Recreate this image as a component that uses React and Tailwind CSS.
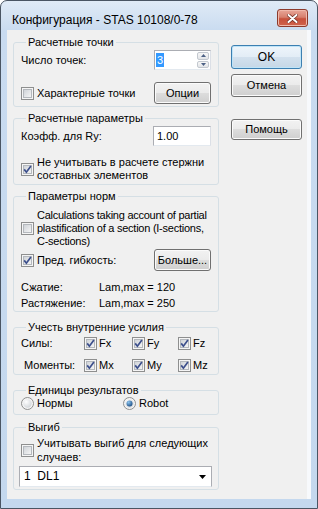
import React from 'react';

const GB = 'border border-[#d5dfe5] rounded-[3px] px-[7px] min-w-0';
const LG = 'ml-[5px] px-[2px] leading-[13px]';

function Check({ checked }) {
  return (
    <svg width="13" height="13" viewBox="0 0 13 13" className="shrink-0">
      <defs>
        <linearGradient id="cbin" x1="0" y1="0" x2="1" y2="1">
          <stop offset="0" stopColor="#cdd1d6" />
          <stop offset="1" stopColor="#f7f7f7" />
        </linearGradient>
      </defs>
      <rect x="0.5" y="0.5" width="12" height="12" fill="#f5f5f5" stroke="#8e8f8f" />
      <rect x="2.5" y="2.5" width="8" height="8" fill="url(#cbin)" stroke="#b4b8bd" />
      {checked && (
        <path d="M3.2 6.4 L5.4 9.2 L9.9 2.9" fill="none" stroke="#3c4f8c" strokeWidth="1.7" />
      )}
    </svg>
  );
}

function Radio({ checked }) {
  return (
    <svg width="13" height="13" viewBox="0 0 13 13" className="shrink-0">
      <defs>
        <radialGradient id="rdin" cx="0.35" cy="0.3" r="0.8">
          <stop offset="0" stopColor="#ffffff" />
          <stop offset="1" stopColor="#cfd3d8" />
        </radialGradient>
        <radialGradient id="rdon" cx="0.35" cy="0.3" r="0.8">
          <stop offset="0" stopColor="#8fc6f0" />
          <stop offset="1" stopColor="#15467d" />
        </radialGradient>
      </defs>
      <circle cx="6.5" cy="6.5" r="6" fill="#f4f4f4" stroke="#8e8f8f" />
      <circle cx="6.5" cy="6.5" r="4.2" fill="url(#rdin)" />
      {checked && <circle cx="6.5" cy="6.5" r="3" fill="url(#rdon)" />}
    </svg>
  );
}

function Btn({ children, def, className }) {
  return (
    <div
      className={
        'flex items-center justify-center rounded-[3px] border ' +
        (def
          ? 'border-[#3c7fb1] bg-[linear-gradient(#eef5fb_0%,#e3edf6_49%,#d3e1ee_50%,#c6d7e6_100%)] shadow-[inset_0_0_0_1px_#bfe4f8] '
          : 'border-[#707070] bg-[linear-gradient(#f2f2f2_0%,#ebebeb_49%,#dddddd_50%,#cfcfcf_100%)] shadow-[inset_0_0_0_1px_#fbfbfb] ') +
        className
      }
    >
      {children}
    </div>
  );
}

function Spin() {
  return (
    <div className="flex h-[20px] w-[57px] border border-[#abadb3] border-b-[#e3e9ef] border-r-[#dbdfe6] bg-white">
      <div className="flex-1 flex items-center pl-[1px]">
        <span className="bg-[#3399ff] text-white leading-[14px] px-[1px]">3</span>
      </div>
      <div className="w-[14px] flex flex-col gap-[1px] p-[1px]">
        <div className="flex-1 flex items-center justify-center rounded-[2px] border border-[#c3c8cf] bg-[linear-gradient(#f7f7f7,#e3e5e8)]">
          <svg width="5" height="3" viewBox="0 0 5 3"><path d="M0 3 L2.5 0 L5 3 Z" fill="#4d6185" /></svg>
        </div>
        <div className="flex-1 flex items-center justify-center rounded-[2px] border border-[#c3c8cf] bg-[linear-gradient(#f7f7f7,#e3e5e8)]">
          <svg width="5" height="3" viewBox="0 0 5 3"><path d="M0 0 L5 0 L2.5 3 Z" fill="#4d6185" /></svg>
        </div>
      </div>
    </div>
  );
}

function Field({ value, className }) {
  return (
    <div className={'flex items-center pl-[3px] bg-white border border-[#abadb3] border-b-[#e3e9ef] border-r-[#dbdfe6] ' + className}>
      {value}
    </div>
  );
}

export default function App() {
  return (
    <div className="w-[318px] h-[509px] flex flex-col rounded-t-[7px] border border-[#4a5563] bg-[linear-gradient(#e0eaf6,#c9dbf0_30px,#c4d8ee)] font-['Liberation_Sans',Arial,sans-serif] text-[11px] text-black leading-[13px]">
      {/* title bar */}
      <div className="h-[29px] flex items-start justify-between shrink-0">
        <div className="pl-[11px] pt-[12px] text-[12px] leading-[14px]">Конфигурация - STAS 10108/0-78</div>
        <div className="mt-[8px] mr-[9px] w-[31px] h-[18px] rounded-[3px] border border-[#8c3a2c] bg-[linear-gradient(#e8a698_0%,#d7806e_45%,#c7503b_55%,#d0634c_100%)] shadow-[inset_0_0_0_1px_#f0b9ab] flex items-center justify-center">
          <svg width="11" height="9" viewBox="0 0 11 9">
            <path d="M1.5 1 L9.5 8 M9.5 1 L1.5 8" stroke="#6d2a20" strokeWidth="3.4" strokeLinecap="round" />
            <path d="M1.5 1 L9.5 8 M9.5 1 L1.5 8" stroke="#ffffff" strokeWidth="2" strokeLinecap="round" />
          </svg>
        </div>
      </div>

      {/* client area */}
      <div className="mx-[6px] mb-[9px] flex-1 bg-[#f0f0f0] flex pl-[6px] pt-[6px] border-r-[4px] border-r-[#f7f9fc]">
        <div className="w-[206px] flex flex-col">
          <fieldset className={GB + ' h-[71px]'}>
            <legend className={LG}>Расчетные точки</legend>
            <div className="flex items-center justify-between h-[20px] mt-[1px]">
              <span>Число точек:</span>
              <Spin />
            </div>
            <div className="flex items-center justify-between h-[22px] mt-[12px]">
              <div className="flex items-center gap-[3px]"><Check />Характерные точки</div>
              <Btn className="w-[57px] h-[22px]">Опции</Btn>
            </div>
          </fieldset>

          <fieldset className={GB + ' h-[73px] mt-[5px]'}>
            <legend className={LG}>Расчетные параметры</legend>
            <div className="flex items-center justify-between h-[20px] mt-[1px]">
              <span>Коэфф. для Ry:</span>
              <Field value="1.00" className="w-[58px] h-[20px]" />
            </div>
            <div className="flex items-center gap-[3px] mt-[10px] whitespace-nowrap">
              <Check checked />
              <div>Не учитывать в расчете стержни<br />составных элементов</div>
            </div>
          </fieldset>

          <fieldset className={GB + ' h-[122px] mt-[5px]'}>
            <legend className={LG}>Параметры норм</legend>
            <div className="flex items-center gap-[3px] mt-[6px] whitespace-nowrap tracking-[-0.25px]">
              <Check />
              <div>Calculations taking account of partial<br />plastification of a section (I-sections,<br />C-sections)</div>
            </div>
            <div className="flex items-center justify-between h-[22px] mt-[1px]">
              <div className="flex items-center gap-[3px]"><Check checked />Пред. гибкость:</div>
              <Btn className="w-[57px] h-[22px]">Больше...</Btn>
            </div>
            <div className="flex mt-[10px]">
              <span className="w-[78px]">Сжатие:</span>
              <span>Lam,max = 120</span>
            </div>
            <div className="flex mt-[3px]">
              <span className="w-[78px]">Растяжение:</span>
              <span>Lam,max = 250</span>
            </div>
          </fieldset>

          <fieldset className={GB + ' h-[54px] mt-[9px]'}>
            <legend className={LG}>Учесть внутренние усилия</legend>
            <div className="flex items-center h-[14px] mt-[2px]">
              <span className="w-[63px]">Силы:</span>
              <div className="w-[48px] flex items-center gap-[2px]"><Check checked />Fx</div>
              <div className="w-[46px] flex items-center gap-[2px]"><Check checked />Fy</div>
              <div className="flex items-center gap-[2px]"><Check checked />Fz</div>
            </div>
            <div className="flex items-center h-[14px] mt-[8px]">
              <span className="w-[63px] pl-[3px]">Моменты:</span>
              <div className="w-[48px] flex items-center gap-[2px]"><Check checked />Mx</div>
              <div className="w-[46px] flex items-center gap-[2px]"><Check checked />My</div>
              <div className="flex items-center gap-[2px]"><Check checked />Mz</div>
            </div>
          </fieldset>

          <fieldset className={GB + ' h-[31px] mt-[9px]'}>
            <legend className={LG}>Единицы результатов</legend>
            <div className="flex items-center h-[13px]">
              <div className="w-[102px] flex items-center gap-[3px]"><Radio />Нормы</div>
              <div className="flex items-center gap-[3px]"><Radio checked />Robot</div>
            </div>
          </fieldset>

          <fieldset className={GB + ' h-[69px] mt-[6px]'}>
            <legend className={LG}>Выгиб</legend>
            <div className="flex items-center gap-[3px] mt-[2px] leading-[14px] whitespace-nowrap">
              <Check />
              <div>Учитывать выгиб для следующих<br />случаев:</div>
            </div>
            <div className="flex items-center justify-between h-[21px] w-[193px] -ml-[2px] mt-[2px] pl-[4px] pr-[5px] bg-white border border-[#abadb3] border-b-[#e3e9ef]">
              <span className="text-[12px]">1&nbsp;&nbsp;DL1</span>
              <svg width="7" height="4" viewBox="0 0 7 4"><path d="M0 0 L7 0 L3.5 4 Z" fill="#000" /></svg>
            </div>
          </fieldset>
        </div>

        <div className="ml-[12px] w-[71px] flex flex-col">
          <Btn def className="h-[24px] mt-[9px] text-[12px]">OK</Btn>
          <Btn className="h-[23px] mt-[5px]">Отмена</Btn>
          <Btn className="h-[21px] mt-[22px]">Помощь</Btn>
        </div>
      </div>
    </div>
  );
}
